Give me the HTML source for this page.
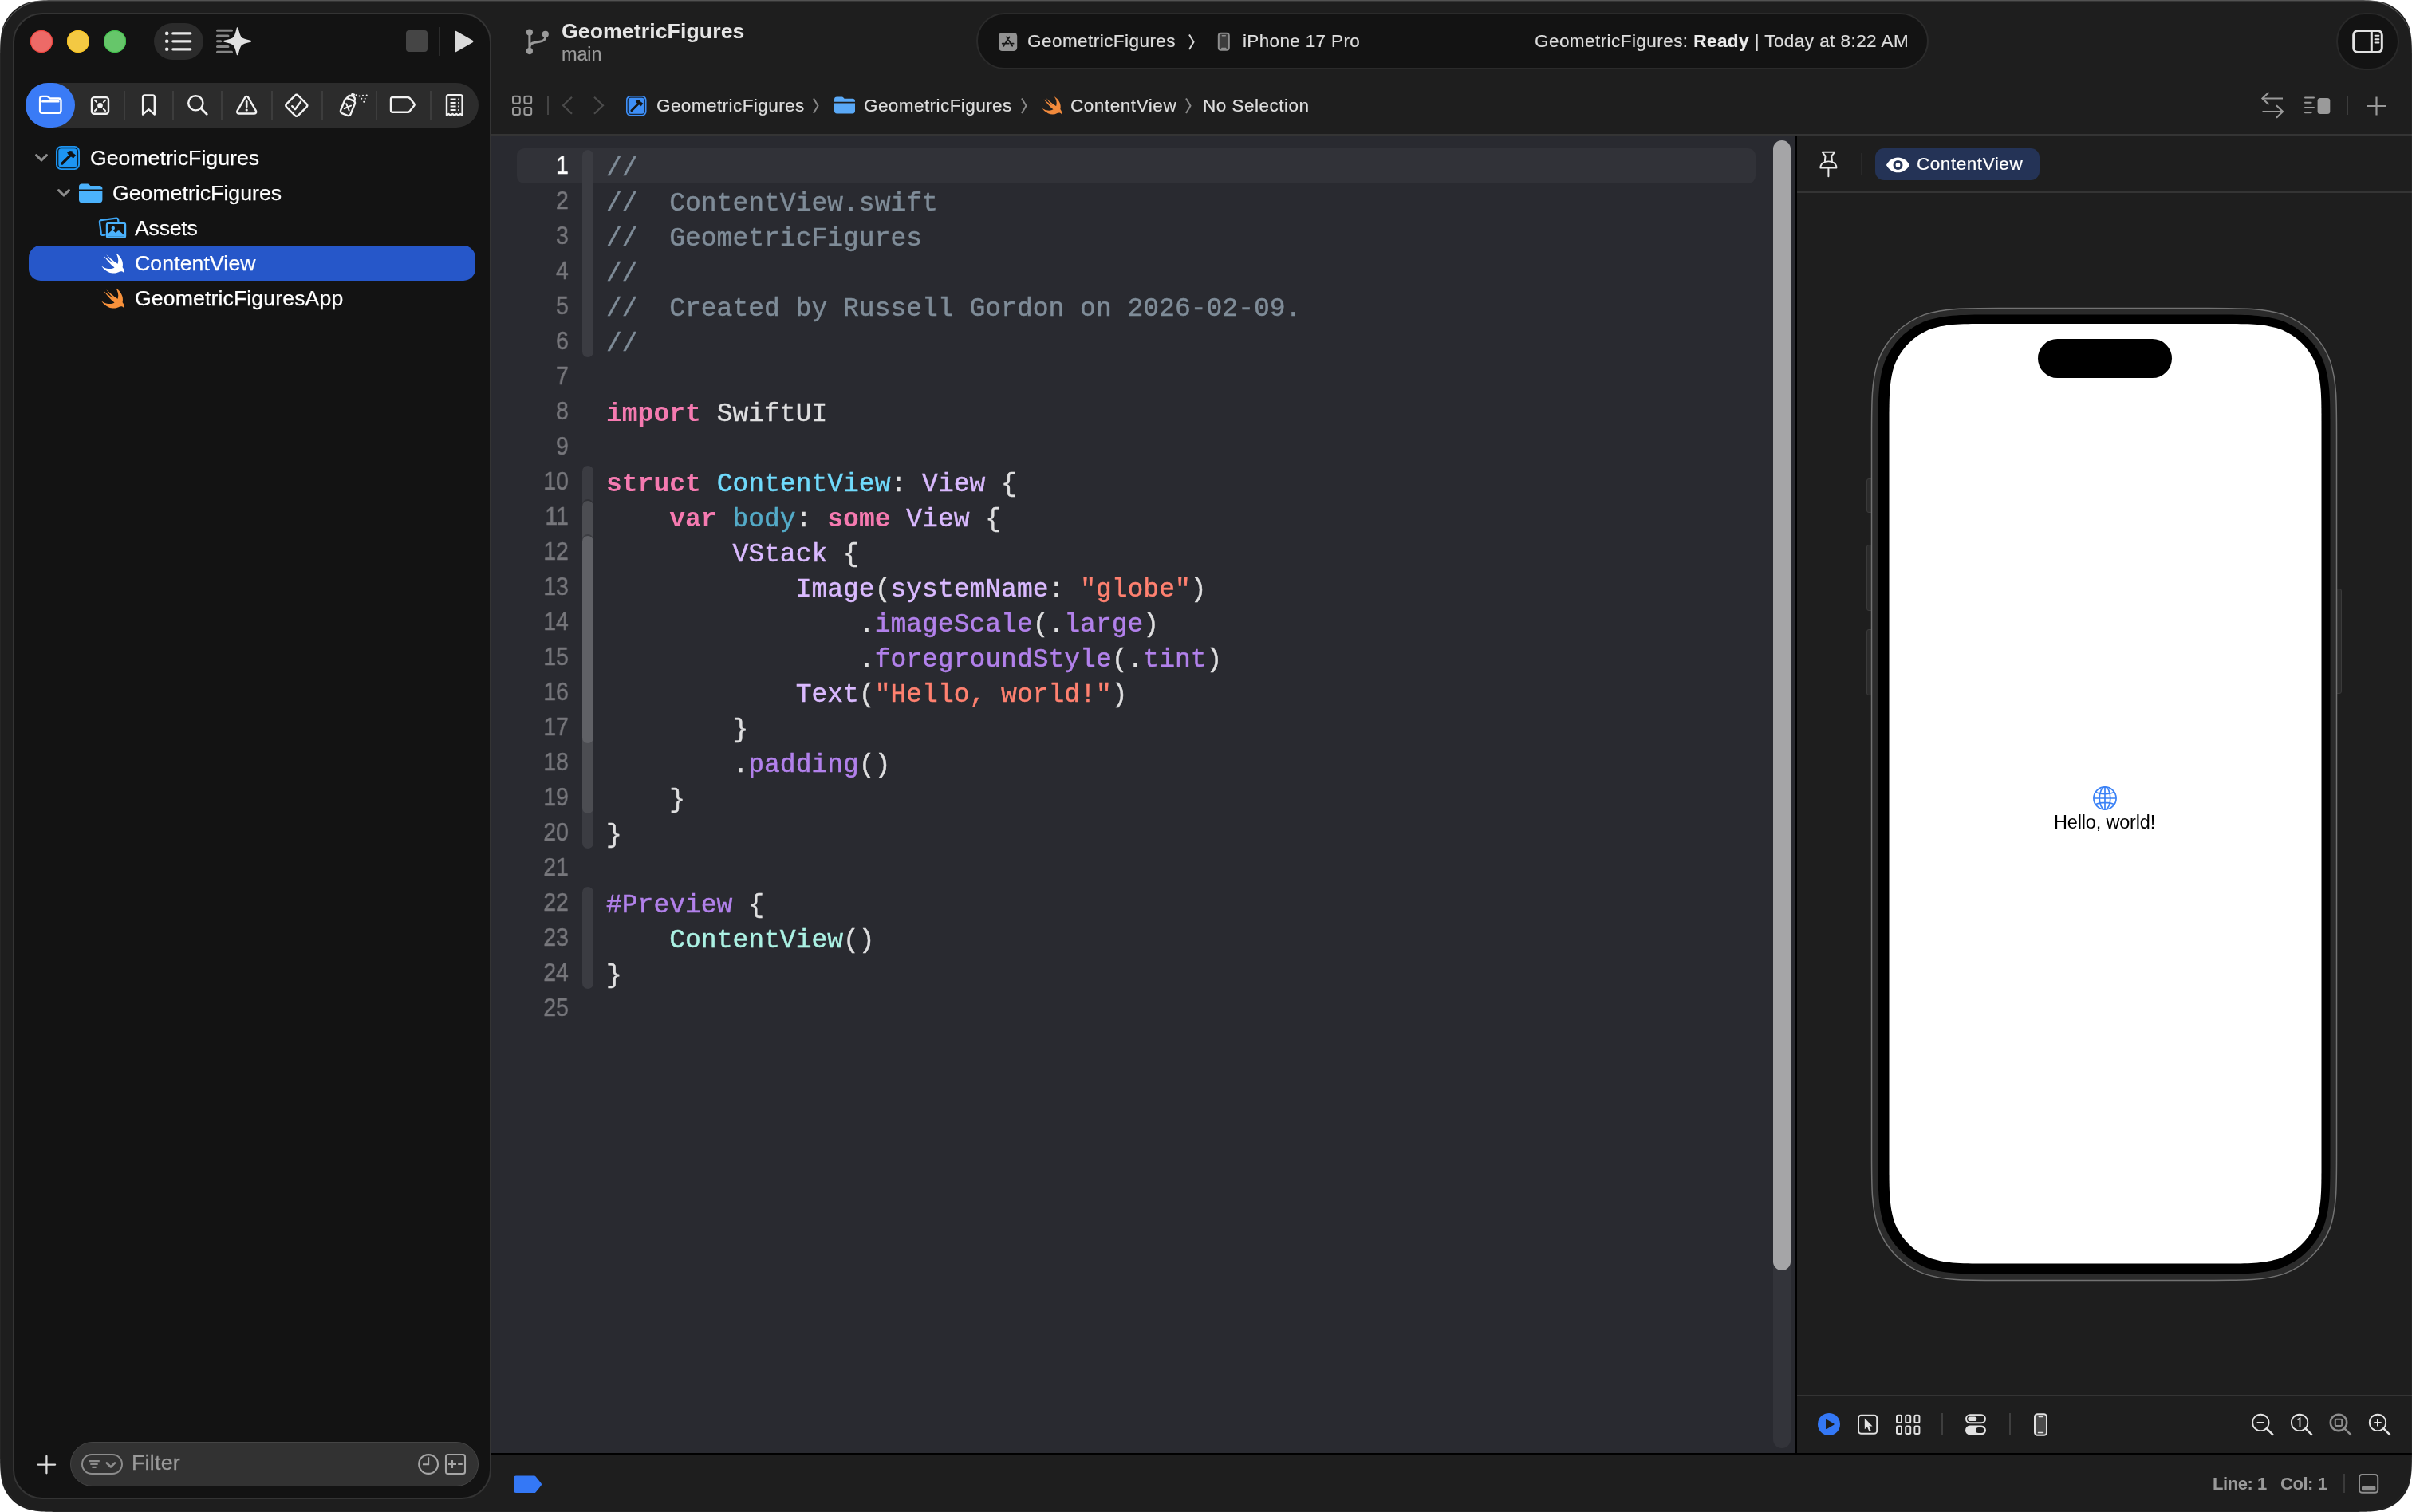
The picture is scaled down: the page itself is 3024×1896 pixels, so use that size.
<!DOCTYPE html>
<html lang="en">
<head>
<meta charset="utf-8">
<title>GeometricFigures — ContentView.swift</title>
<style>
*{box-sizing:border-box;margin:0;padding:0}
html,body{width:3024px;height:1896px;background:#fff;overflow:hidden}
body{font-family:"Liberation Sans",sans-serif;color:#dfdfdf;position:relative}
.abs{position:absolute}
#win{position:absolute;left:0;top:0;width:3024px;height:1896px;background:#1e1e1e;overflow:hidden;clip-path:path('M79.49 0L2944.51 0C2967.4 0 2978.84 0 2991.16 3.9C3004.61 8.79 3015.21 19.39 3020.1 32.84C3024 45.16 3024 56.6 3024 79.49L3024 1816.51C3024 1839.4 3024 1850.84 3020.1 1863.16C3015.21 1876.61 3004.61 1887.21 2991.16 1892.1C2978.84 1896 2967.4 1896 2944.51 1896L79.49 1896C56.6 1896 45.16 1896 32.84 1892.1C19.39 1887.21 8.79 1876.61 3.9 1863.16C0 1850.84 0 1839.4 0 1816.51L0 79.49C0 56.6 0 45.16 3.9 32.84C8.79 19.39 19.39 8.79 32.84 3.9C45.16 0 56.6 0 79.49 0Z')}
#winhl{position:absolute;left:0;top:0;width:3024px;height:1896px;border-radius:56px;box-shadow:inset 0 1.5px 0 rgba(255,255,255,.2), inset 0 0 0 1px rgba(255,255,255,.04);pointer-events:none;z-index:50;clip-path:path('M79.49 0L2944.51 0C2967.4 0 2978.84 0 2991.16 3.9C3004.61 8.79 3015.21 19.39 3020.1 32.84C3024 45.16 3024 56.6 3024 79.49L3024 1816.51C3024 1839.4 3024 1850.84 3020.1 1863.16C3015.21 1876.61 3004.61 1887.21 2991.16 1892.1C2978.84 1896 2967.4 1896 2944.51 1896L79.49 1896C56.6 1896 45.16 1896 32.84 1892.1C19.39 1887.21 8.79 1876.61 3.9 1863.16C0 1850.84 0 1839.4 0 1816.51L0 79.49C0 56.6 0 45.16 3.9 32.84C8.79 19.39 19.39 8.79 32.84 3.9C45.16 0 56.6 0 79.49 0Z')}
#sidebar{position:absolute;left:16px;top:16px;width:600px;height:1864px;border-radius:37px;background:#131313;border:2px solid #343434;z-index:5}
#editor{position:absolute;left:616px;top:170px;width:1635px;height:1652px;background:#292a30;overflow:hidden}
#preview{position:absolute;left:2253px;top:170px;width:771px;height:1652px;background:#1e1e1e}
.hline{position:absolute;height:2px;background:#343434}
.vline{position:absolute;width:2px;background:#3a3a3a}
svg{position:absolute;overflow:visible}
.t{position:absolute;white-space:pre;line-height:1;will-change:transform}
/* text styles */
.s13{font-size:26.600px;letter-spacing:.05px;color:#fff;-webkit-text-stroke:.25px}
.s11{font-size:22.5px;letter-spacing:.38px;color:#dedede;-webkit-text-stroke:.2px}
/* code */
#code{will-change:transform;position:absolute;left:143.8px;top:19.75px;-webkit-text-stroke:.45px;font-family:"Liberation Mono",monospace;font-size:33px;line-height:44px;color:#dfdfe0;white-space:pre}
#code div{height:44px}
.cm{color:#7f8c98}.kw{color:#f57ab0;font-weight:bold;-webkit-text-stroke:0}.st{color:#ff8170}.td{color:#70dbfd}.od{color:#54abc8}
.pt{color:#acf2e4}.ot{color:#dabaff}.of{color:#b281eb}
#lnum{will-change:transform;position:absolute;left:0;top:15px;width:96.8px;-webkit-text-stroke:.55px;text-align:right;font-size:32px;line-height:44px;color:#77777c;transform:scaleX(.885);transform-origin:100% 0}
#lnum div{height:44px}
.rib{position:absolute;left:114px;width:14px;border-radius:7px}
</style>
</head>
<body>
<svg width="0" height="0" style="position:absolute"><defs>
<g id="swift"><path transform="translate(-3.600 -5.400) scale(1.585)" d="M13.543 3.410c4.114 2.470 6.545 7.162 5.549 11.131-.024.093-.050.181-.076.272l.002.001c2.062 2.538 1.500 5.258 1.236 4.745-1.072-2.086-3.066-1.568-4.088-1.043a6.803 6.803 0 0 1-.281.158l-.020.012-.002.002c-2.115 1.123-4.957 1.205-7.812-.022a12.568 12.568 0 0 1-5.640-4.838c.649.480 1.350.902 2.097 1.252 3.019 1.414 6.051 1.311 8.197-.002C9.651 12.730 7.101 9.670 5.146 7.191a10.628 10.628 0 0 1-1.005-1.384c2.340 2.142 6.038 4.830 7.365 5.576C8.690 8.408 6.208 4.743 6.324 4.860c4.436 4.470 8.528 6.996 8.528 6.996.154.085.270.154.360.213.085-.215.160-.437.224-.668.708-2.588-.090-5.548-1.893-7.992z"/></g>
<g id="foldericon"><path d="M0 4.200C0 1.900 1.400.500 3.700.500h6.600c1.400 0 2.200.400 3.100 1.300l1.200 1.200h11.700c2.300 0 3.700 1.400 3.700 3.700v.900H0zM0 9.600h30v11.200c0 2.300-1.400 3.700-3.700 3.700H3.700C1.400 24.500 0 23.100 0 20.800z"/></g>
<g id="projicon"><rect width="30" height="30" rx="6.500" fill="#1d95f3"/><rect x="2.600" y="2.600" width="24.800" height="24.800" rx="4.300" fill="none" stroke="#0b2233" stroke-width="1.500"/><path d="M8 22L18.200 11.800" fill="none" stroke="#111" stroke-width="3.300" stroke-linecap="round"/><path d="M14.600 7.900c2.200-1.500 4.700-1.700 6.300-.800l-1 1.100 4.700 3.300-2.600 3.600-6.300-4.500z" fill="#111" stroke="#111" stroke-width=".8" stroke-linejoin="round"/></g>
<g id="projicon2"><rect width="30" height="30" rx="6.500" fill="#3e8ff7"/><rect x="2.600" y="2.600" width="24.800" height="24.800" rx="4.300" fill="none" stroke="#15263d" stroke-width="1.500"/><path d="M8 22L18.200 11.800" fill="none" stroke="#151515" stroke-width="3.300" stroke-linecap="round"/><path d="M14.600 7.900c2.200-1.500 4.700-1.700 6.300-.800l-1 1.100 4.700 3.300-2.600 3.600-6.300-4.500z" fill="#151515" stroke="#151515" stroke-width=".8" stroke-linejoin="round"/></g>
<g id="chev"><path d="M1.600 1.600L8 8l6.400-6.400" fill="none" stroke="#8c8c8c" stroke-width="3.100" stroke-linecap="round" stroke-linejoin="round"/></g>
</defs></svg>
<div id="win">

<!-- ===== top toolbar (right of sidebar) ===== -->
<!-- title / branch -->
<svg style="left:656px;top:32px" width="36" height="40" viewBox="656 32 36 40"><g fill="#9a9a9a" stroke="none"><circle cx="663.9" cy="40.6" r="4.1"/><circle cx="683.8" cy="42.9" r="4.1"/><circle cx="663.9" cy="64.1" r="4.1"/></g><path d="M663.9 40.6V64.1M683.800 42.900V46.500C683.800 50.500 681 51.600 676.500 52.300L670.500 53.300C666 54.100 663.900 56 663.900 60" fill="none" stroke="#9a9a9a" stroke-width="3"/></svg>
<div class="t" style="left:703.600px;top:25.600px;font-size:26.600px;font-weight:bold;letter-spacing:.12px;color:#e6e6e6">GeometricFigures</div>
<div class="t" style="left:703.600px;top:57px;font-size:23.500px;letter-spacing:-.15px;color:#9b9b9b;-webkit-text-stroke:.2px">main</div>

<!-- activity pill -->
<div class="abs" style="left:1224px;top:16px;width:1194px;height:71px;border-radius:36px;background:#131313;border:2px solid #2b2b2b"></div>
<svg style="left:1251.900px;top:40.600px" width="23.300" height="23.100" viewBox="0 0 24 24"><rect width="24" height="24" rx="4.600" fill="#929292"/><path d="M13.900 5.700L8.400 14.200M10.400 5.600L17.700 17.500M4.800 14.200H13M16.400 14.200H19.200M7.300 15.900L6.500 17.400" fill="none" stroke="#161616" stroke-width="1.900" stroke-linecap="round"/></svg>
<div class="t s11" style="left:1288px;top:41px;letter-spacing:.45px">GeometricFigures</div>
<svg style="left:1489px;top:42px" width="10" height="22" viewBox="0 0 10 22"><path d="M2 1.500L7.500 10.800 2 20.100" fill="none" stroke="#d8d8d8" stroke-width="2"/></svg>
<svg style="left:1526px;top:40px" width="17" height="25" viewBox="0 0 17 25"><rect x="1.800" y="1.800" width="13" height="21" rx="3" fill="#3c3c3c" stroke="#8e8e8e" stroke-width="2"/><path d="M6.300 4.700h4M5.800 20.400h5" stroke="#8e8e8e" stroke-width="1.400" stroke-linecap="round"/></svg>
<div class="t s11" style="left:1558px;top:41px;letter-spacing:.35px">iPhone 17 Pro</div>
<div class="t s11" style="left:1924px;top:41px;letter-spacing:.44px;color:#dcdcdc">GeometricFigures: <b style="color:#ececec">Ready</b> | Today at 8:22 AM</div>

<!-- inspector toggle -->
<div class="abs" style="left:2929px;top:16px;width:79px;height:72px;border-radius:36px;background:#131313;border:2px solid #292929"></div>
<svg style="left:2946px;top:34px" width="46" height="36" viewBox="2946 34 46 36"><rect x="2950.700" y="38.400" width="35.600" height="27.200" rx="5.500" fill="none" stroke="#e2e2e2" stroke-width="3"/><path d="M2973.300 38.400v27.200" stroke="#e2e2e2" stroke-width="3"/><path d="M2977.600 44.800h4.800M2977.600 49.200h4.800M2977.600 53.600h4.800" stroke="#e2e2e2" stroke-width="2" stroke-linecap="round"/></svg>

<!-- jump bar -->
<svg style="left:640px;top:118px" width="30" height="30" viewBox="640 118 30 30"><g fill="none" stroke="#9a9a9a" stroke-width="2"><rect x="643" y="120.700" width="8.800" height="9" rx="2.200"/><rect x="657.400" y="120.700" width="8.800" height="9" rx="2.200"/><rect x="643" y="135" width="8.800" height="9" rx="2.200"/><rect x="657.400" y="135" width="8.800" height="9" rx="2.200"/></g></svg>
<div class="abs" style="left:686px;top:120px;width:2px;height:24px;background:#444"></div>
<svg style="left:700px;top:118px" width="64" height="30" viewBox="700 118 64 30"><path d="M717 121.800L706 132.300 717 142.800M745 121.800L756 132.300 745 142.800" fill="none" stroke="#4b4b4b" stroke-width="2.200"/></svg>
<svg style="left:785px;top:119.500px" width="25.500" height="25.500" viewBox="0 0 30 30"><use href="#projicon2"/></svg>
<div class="t s11" style="left:822.500px;top:121.500px;letter-spacing:.43px">GeometricFigures</div>
<svg style="left:1018px;top:122px" width="10" height="22" viewBox="0 0 10 22"><path d="M2 1.500L7.500 10.800 2 20.100" fill="none" stroke="#8a8a8a" stroke-width="2"/></svg>
<svg style="left:1045.500px;top:120.500px" width="26" height="22" viewBox="0 0 30 25"><use href="#foldericon" fill="#5aa9f7"/></svg>
<div class="t s11" style="left:1082.500px;top:121.500px;letter-spacing:.43px">GeometricFigures</div>
<svg style="left:1278.500px;top:122px" width="10" height="22" viewBox="0 0 10 22"><path d="M2 1.500L7.500 10.800 2 20.100" fill="none" stroke="#8a8a8a" stroke-width="2"/></svg>
<svg style="left:1306px;top:121px" width="25.500" height="22" viewBox="0 0 29 25"><use href="#swift" fill="#f28a3c"/></svg>
<div class="t s11" style="left:1342px;top:121.500px;letter-spacing:.55px">ContentView</div>
<svg style="left:1485px;top:122px" width="10" height="22" viewBox="0 0 10 22"><path d="M2 1.500L7.500 10.800 2 20.100" fill="none" stroke="#8a8a8a" stroke-width="2"/></svg>
<div class="t s11" style="left:1508px;top:121.500px;letter-spacing:.5px">No Selection</div>

<!-- editor options (right) -->
<svg style="left:2832px;top:112px" width="36" height="40" viewBox="2832 112 36 40"><path d="M2862 123.500h-25.500M2844.500 115.800l-8 7.700 8 7.700M2836.500 140h25.500M2854 132.300l8 7.700-8 7.700" fill="none" stroke="#9a9a9a" stroke-width="2.200"/></svg>
<svg style="left:2886px;top:118px" width="40" height="28" viewBox="2886 118 40 28"><path d="M2890 122.400h11M2890 128.700h7.600M2890 134.900h11M2890 141.200h7.600" stroke="#9a9a9a" stroke-width="2" stroke-linecap="round"/><rect x="2905.600" y="123" width="15.700" height="20" rx="3.500" fill="#9a9a9a"/></svg>
<div class="abs" style="left:2942px;top:120px;width:2px;height:24px;background:#3c3c3c"></div>
<svg style="left:2966px;top:120px" width="28" height="26" viewBox="2966 120 28 26"><path d="M2968 133h23M2979.500 121.500v23" stroke="#9a9a9a" stroke-width="2.200"/></svg>

<div class="hline" style="left:616px;top:168px;width:2408px"></div>

<!-- ===== editor ===== -->
<div id="editor">
  <div class="abs" style="left:32px;top:16px;width:1553px;height:44px;border-radius:9px;background:#313238"></div>
  <div class="rib" style="top:18px;height:260px;background:#3b3c42"></div>
  <div class="rib" style="top:414px;height:480px;background:#3b3c42"></div>
  <div class="rib" style="top:458px;height:392px;background:#4c4d52;box-shadow:0 -2px 0 #303136"></div>
  <div class="rib" style="top:502px;height:260px;background:#606166;box-shadow:0 -2px 0 #3c3d42"></div>
  <div class="rib" style="top:942px;height:128px;background:#3b3c42"></div>
  <div id="lnum"><div style="color:#fff">1</div><div>2</div><div>3</div><div>4</div><div>5</div><div>6</div><div>7</div><div>8</div><div>9</div><div>10</div><div>11</div><div>12</div><div>13</div><div>14</div><div>15</div><div>16</div><div>17</div><div>18</div><div>19</div><div>20</div><div>21</div><div>22</div><div>23</div><div>24</div><div>25</div></div>
  <div id="code"><div class="cm">//</div><div class="cm">//  ContentView.swift</div><div class="cm">//  GeometricFigures</div><div class="cm">//</div><div class="cm">//  Created by Russell Gordon on 2026-02-09.</div><div class="cm">//</div><div> </div><div><span class="kw">import</span> SwiftUI</div><div> </div><div><span class="kw">struct</span> <span class="td">ContentView</span>: <span class="ot">View</span> {</div><div>    <span class="kw">var</span> <span class="od">body</span>: <span class="kw">some</span> <span class="ot">View</span> {</div><div>        <span class="ot">VStack</span> {</div><div>            <span class="ot">Image</span>(<span class="ot">systemName</span>: <span class="st">"globe"</span>)</div><div>                .<span class="of">imageScale</span>(.<span class="of">large</span>)</div><div>                .<span class="of">foregroundStyle</span>(.<span class="of">tint</span>)</div><div>            <span class="ot">Text</span>(<span class="st">"Hello, world!"</span>)</div><div>        }</div><div>        .<span class="of">padding</span>()</div><div>    }</div><div>}</div><div> </div><div><span class="of">#Preview</span> {</div><div>    <span class="pt">ContentView</span>()</div><div>}</div><div> </div></div>
  <!-- scrollbar -->
  <div class="abs" style="left:1607px;top:6px;width:22px;height:1640px;border-radius:11px;background:#33343a"></div>
  <div class="abs" style="left:1607px;top:6px;width:22px;height:1417px;border-radius:11px;background:#a5a5a7"></div>
</div>
<div class="abs" style="left:2251px;top:170px;width:2px;height:1652px;background:#000"></div>
<div class="abs" style="left:616px;top:1822px;width:2408px;height:2px;background:#000"></div>

<!-- ===== preview canvas ===== -->
<div id="preview">
  <div class="hline" style="left:0;top:70px;width:771px"></div>
  <div class="hline" style="left:0;top:1579px;width:771px"></div>
</div>


<!-- preview header (window coords) -->
<svg style="left:2278px;top:188px" width="30" height="36" viewBox="2278 188 30 36" fill="none" stroke="#e8e8e8" stroke-width="2" stroke-linejoin="round" stroke-linecap="round"><path d="M2284.800 190.800H2300.200L2296.300 195.600 2297 203.100C2300.500 204.400 2302.400 207.200 2302.400 210.500H2282.400C2282.400 207.200 2284.300 204.400 2287.800 203.100L2288.500 195.600Z"/><path d="M2287.800 203.100Q2292.400 201.600 2297 203.100" stroke-width="1.600"/><path d="M2292.400 211V221.200"/></svg>
<div class="abs" style="left:2333px;top:192px;width:2px;height:27px;background:#292929"></div>
<div class="abs" style="left:2351px;top:186px;width:206px;height:40px;border-radius:11px;background:#243356"></div>
<svg style="left:2364px;top:196px" width="32" height="22" viewBox="2364 196 32 22"><path d="M2364.900 206.900c3.300-5.800 8.300-9.300 14.600-9.300s11.300 3.500 14.600 9.300c-3.300 5.800-8.300 9.300-14.600 9.300s-11.300-3.500-14.600-9.300z" fill="#fff"/><circle cx="2379.500" cy="206.900" r="6" fill="#243356"/><circle cx="2379.500" cy="206.900" r="2.900" fill="#fff"/></svg>
<div class="t s11" style="left:2403px;top:195px;letter-spacing:.55px;color:#fff">ContentView</div>

<!-- device -->
<div class="abs" style="left:2340px;top:600px;width:8px;height:43px;border-radius:3px 0 0 3px;background:#2b2b2b;border:1px solid #3a3a3a"></div>
<div class="abs" style="left:2340px;top:683px;width:8px;height:83px;border-radius:3px 0 0 3px;background:#2b2b2b;border:1px solid #3a3a3a"></div>
<div class="abs" style="left:2340px;top:789px;width:8px;height:83px;border-radius:3px 0 0 3px;background:#2b2b2b;border:1px solid #3a3a3a"></div>
<div class="abs" style="left:2928px;top:738px;width:8px;height:132px;border-radius:0 3px 3px 0;background:#2b2b2b;border:1px solid #3a3a3a"></div>
<svg style="left:2346px;top:386px" width="584" height="1220" viewBox="0 0 584 1220"><path d="M161.77 0.5L422.23 0.5C468.66 0.5 491.88 0.5 516.88 8.4C544.17 18.34 565.66 39.83 575.6 67.12C583.5 92.12 583.5 115.34 583.5 161.77L583.5 1058.23C583.5 1104.66 583.5 1127.88 575.6 1152.88C565.66 1180.17 544.17 1201.66 516.88 1211.6C491.88 1219.5 468.66 1219.5 422.23 1219.5L161.77 1219.5C115.34 1219.5 92.12 1219.5 67.12 1211.6C39.83 1201.66 18.34 1180.17 8.4 1152.88C0.5 1127.88 0.5 1104.66 0.5 1058.23L0.5 161.77C0.5 115.34 0.5 92.12 8.4 67.12C18.34 39.83 39.83 18.34 67.12 8.4C92.12 0.5 115.34 0.5 161.77 0.5Z" fill="#2b2b2b" stroke="#727272" stroke-width="1.5"/><path d="M158.31 8.5L425.69 8.5C468.83 8.5 490.4 8.5 513.61 15.84C538.96 25.07 558.93 45.04 568.16 70.39C575.5 93.6 575.5 115.17 575.5 158.31L575.5 1061.69C575.5 1104.83 575.5 1126.4 568.16 1149.61C558.93 1174.96 538.96 1194.93 513.61 1204.16C490.4 1211.5 468.83 1211.5 425.69 1211.5L158.31 1211.5C115.17 1211.5 93.6 1211.5 70.39 1204.16C45.04 1194.93 25.07 1174.96 15.84 1149.61C8.5 1126.4 8.5 1104.83 8.5 1061.69L8.5 158.31C8.5 115.17 8.5 93.6 15.84 70.39C25.07 45.04 45.04 25.07 70.39 15.84C93.6 8.5 115.17 8.5 158.31 8.5Z" fill="#000"/><path d="M150.91 20L436.09 20C473.07 20 491.55 20 511.45 26.29C533.18 34.2 550.3 51.32 558.21 73.05C564.5 92.95 564.5 111.43 564.5 148.41L564.5 1070.09C564.5 1107.07 564.5 1125.55 558.21 1145.45C550.3 1167.18 533.18 1184.3 511.45 1192.21C491.55 1198.5 473.07 1198.5 436.09 1198.5L150.91 1198.5C113.93 1198.5 95.45 1198.5 75.55 1192.21C53.82 1184.3 36.7 1167.18 28.79 1145.45C22.5 1125.55 22.5 1107.07 22.5 1070.09L22.5 148.41C22.5 111.43 22.5 92.95 28.79 73.05C36.7 51.32 53.82 34.2 75.55 26.29C95.45 20 113.93 20 150.91 20Z" fill="#fff"/></svg>
<div class="abs" style="left:2554.500px;top:424.500px;width:168.500px;height:49.500px;border-radius:25px;background:#000"></div>
<svg style="left:2622px;top:984px" width="34" height="34" viewBox="-17 -17 34 34" fill="none" stroke="#3b82f6" stroke-width="1.700"><circle r="14.100"/><ellipse rx="6.800" ry="14"/><path d="M0-14v28M-14 0h28M-11.600-7.600c3.200 1.500 7.200 2.300 11.600 2.300s8.400-.800 11.600-2.300M-11.600 7.600c3.200-1.500 7.200-2.300 11.600-2.300s8.400.800 11.600 2.300"/></svg>
<div class="t" style="left:2574.800px;top:1019.800px;font-size:23.500px;letter-spacing:-.17px;color:#000">Hello, world!</div>

<!-- preview bottom toolbar -->
<div class="abs" style="left:2279px;top:1772px;width:28px;height:28px;border-radius:50%;background:#3478f6"></div>
<svg style="left:2286px;top:1778px" width="16" height="16" viewBox="2286 1778 16 16"><path d="M2289 1780.800v10.400a.8.800 0 0 0 1.200.7l9-5.200a.8.800 0 0 0 0-1.400l-9-5.200a.8.800 0 0 0-1.200.7z" fill="#1e1e1e"/></svg>
<svg style="left:2326px;top:1770px" width="250" height="34" viewBox="2326 1770 250 34" fill="none" stroke="#e2e2e2" stroke-width="2">
<rect x="2330" y="1774.700" width="23.200" height="23" rx="3.500"/><path d="M2337.800 1778.500v13.800l3.200-3 2.600 6 2.200-1-2.600-5.800h4.400z" fill="#e2e2e2" stroke="none"/>
<rect x="2378" y="1774.700" width="6" height="9.400" rx="1.500"/><rect x="2389.200" y="1774.700" width="6" height="9.400" rx="1.500"/><rect x="2400.400" y="1774.700" width="6" height="9.400" rx="1.500"/><rect x="2378" y="1788.500" width="6" height="9.400" rx="1.500"/><rect x="2389.200" y="1788.500" width="6" height="9.400" rx="1.500"/><rect x="2400.400" y="1788.500" width="6" height="9.400" rx="1.500"/>
<rect x="2465" y="1774.200" width="24" height="10" rx="5"/><rect x="2467.300" y="1776.400" width="11" height="5.600" rx="2.800" fill="#e2e2e2" stroke="none"/>
<rect x="2464" y="1787.500" width="26" height="12" rx="6" fill="#e2e2e2" stroke="none"/><rect x="2477" y="1790" width="10.500" height="7" rx="3.500" fill="#1e1e1e" stroke="none"/>
<rect x="2551" y="1773.200" width="15" height="26.600" rx="3.500" fill="#4a4a4a"/><path d="M2556.300 1776.600h4.400M2555.500 1796.600h6" stroke-width="1.500" stroke-linecap="round"/>
</svg>
<div class="abs" style="left:2434px;top:1772px;width:2px;height:28px;background:#3e3e3e"></div>
<div class="abs" style="left:2519px;top:1772px;width:2px;height:28px;background:#3e3e3e"></div>
<svg style="left:2818px;top:1768px" width="184" height="36" viewBox="2818 1768 184 36" fill="none" stroke="#e4e4e4" stroke-width="1.900">
<circle cx="2834.300" cy="1783.900" r="10.200"/><path d="M2841.700 1791.300l7.600 7.600" stroke-width="2.600" stroke-linecap="round"/><path d="M2829.600 1783.900h9.400" stroke-width="2"/>
<circle cx="2883.100" cy="1783.900" r="10.200"/><path d="M2890.500 1791.300l7.600 7.600" stroke-width="2.600" stroke-linecap="round"/><path d="M2880.500 1780.500l3-2v11" stroke-width="1.800"/>
<g stroke="#8e8e8e"><circle cx="2932" cy="1783.900" r="10.200" stroke-width="2.600"/><path d="M2939.400 1791.300l7.600 7.600" stroke-width="2.600" stroke-linecap="round"/><rect x="2927.800" y="1779.700" width="8.400" height="8.400" rx="1.500" stroke-width="2"/></g>
<circle cx="2981" cy="1783.900" r="10.200"/><path d="M2988.400 1791.300l7.600 7.600" stroke-width="2.600" stroke-linecap="round"/><path d="M2976.300 1783.900h9.400M2981 1779.200v9.400" stroke-width="2"/>
</svg>

<!-- status bar -->
<svg style="left:642px;top:1848.800px" width="40" height="26" viewBox="642 1848 40 26"><path d="M644 1852.600c0-1.900 1.100-3 3-3h22.500c1 0 1.800.400 2.400 1.200l6.600 8.200c.700.900.700 1.800 0 2.700l-6.600 8.200c-.6.800-1.400 1.200-2.400 1.200H647c-1.900 0-3-1.100-3-3z" fill="#3478f6"/></svg>
<div class="t" style="left:2774.300px;top:1850px;font-size:22px;font-weight:bold;letter-spacing:-.45px;color:#9a9a9a">Line: 1</div><div class="t" style="left:2858.500px;top:1850px;font-size:22px;font-weight:bold;letter-spacing:-.45px;color:#9a9a9a">Col: 1</div>
<div class="abs" style="left:2938px;top:1848px;width:2px;height:24px;background:#3a3a3a"></div>
<svg style="left:2954px;top:1846px" width="32" height="30" viewBox="2954 1846 32 30"><rect x="2958" y="1849" width="23.200" height="22.700" rx="3.500" fill="none" stroke="#8e8e8e" stroke-width="2"/><rect x="2961" y="1863.900" width="17.400" height="5.400" rx="1" fill="#8e8e8e"/></svg>

<!-- ===== sidebar ===== -->
<div id="sbc" style="position:absolute;left:0;top:0;width:620px;height:1896px;z-index:6">
<!-- traffic lights -->
<div class="abs" style="left:38px;top:38px;width:28px;height:28px;border-radius:50%;background:#ed6a67;box-shadow:inset 0 0 0 1px rgba(246,62,54,.85)"></div>
<div class="abs" style="left:84px;top:38px;width:28px;height:28px;border-radius:50%;background:#f3c943;box-shadow:inset 0 0 0 1px rgba(250,194,24,.85)"></div>
<div class="abs" style="left:130px;top:38px;width:28px;height:28px;border-radius:50%;background:#66c66a;box-shadow:inset 0 0 0 1px rgba(58,194,70,.85)"></div>
<!-- sidebar toggle -->
<div class="abs" style="left:193px;top:29px;width:62px;height:46px;border-radius:23px;background:#2b2b2b"></div>
<svg style="left:200px;top:34px" width="50" height="36" viewBox="200 34 50 36"><g fill="#e6e6e6"><circle cx="209.200" cy="41.900" r="2.300"/><circle cx="209.200" cy="51.800" r="2.300"/><circle cx="209.200" cy="61.800" r="2.300"/></g><path d="M216.800 41.900h22M216.800 51.800h22M216.800 61.800h22" stroke="#e6e6e6" stroke-width="3.300" stroke-linecap="round"/></svg>
<!-- assistant sparkle -->
<svg style="left:266px;top:30px" width="54" height="44" viewBox="266 30 54 44"><path d="M272.500 38.200h18M272.500 45.100h13.400M272.500 51.800h4.200M272.500 58.500h13.400M272.500 65.400h18" stroke="#868686" stroke-width="3.100" stroke-linecap="round"/><path transform="translate(297.700 51.800)" d="M0-16.500C3-3.200 3.200-3 16.500 0 3.200 3 3 3.200 0 16.500-3 3.200-3.200 3-16.500 0-3.200-3-3-3.200 0-16.500Z" fill="#e0e0e0" stroke="#e0e0e0" stroke-width="2" stroke-linejoin="round"/></svg>
<!-- stop / run -->
<div class="abs" style="left:509px;top:38px;width:27px;height:27px;border-radius:4px;background:#454545"></div>
<div class="abs" style="left:550px;top:34px;width:2px;height:36px;background:#2c2c2c"></div>
<svg style="left:566px;top:36px" width="32" height="32" viewBox="566 36 32 32"><path d="M570 40.200v23.600a1.400 1.400 0 0 0 2.100 1.200l20.600-11.800a1.400 1.400 0 0 0 0-2.400L572.100 39a1.400 1.400 0 0 0-2.100 1.200z" fill="#dadada"/></svg>

<!-- navigator tab bar -->
<div class="abs" style="left:32px;top:104px;width:568px;height:56px;border-radius:28px;background:#2c2c2c"></div>
<div class="abs" style="left:32px;top:104px;width:62px;height:56px;border-radius:28px;background:#3a7bf6"></div>
<div class="abs" style="left:155px;top:114px;width:2px;height:36px;background:#3d3d3d"></div>
<div class="abs" style="left:216px;top:114px;width:2px;height:36px;background:#3d3d3d"></div>
<div class="abs" style="left:277px;top:114px;width:2px;height:36px;background:#3d3d3d"></div>
<div class="abs" style="left:340px;top:114px;width:2px;height:36px;background:#3d3d3d"></div>
<div class="abs" style="left:403px;top:114px;width:2px;height:36px;background:#3d3d3d"></div>
<div class="abs" style="left:471px;top:114px;width:2px;height:36px;background:#3d3d3d"></div>
<div class="abs" style="left:539px;top:114px;width:2px;height:36px;background:#3d3d3d"></div>
<svg style="left:40px;top:110px" width="560" height="44" viewBox="40 110 560 44" fill="none" stroke="#f2f2f2" stroke-width="2.400" stroke-linejoin="round" stroke-linecap="round">
<!-- folder -->
<path d="M50.100 124.300v-.400c0-1.900 1.100-3 3-3h5.500c1 0 1.700.300 2.400 1l1.600 1.600h10.900c1.900 0 3 1.100 3 3v12.200c0 1.900-1.100 3-3 3H53.100c-1.900 0-3-1.100-3-3zM53.200 127.200h20.200" stroke="#fff"/>
<!-- source control -->
<rect x="115" y="122.100" width="21" height="20.600" rx="3"/><circle cx="125.500" cy="132.400" r="3.300" fill="#f2f2f2" stroke="none"/><path d="M118.900 125.800l2.300 2.300M132.100 125.800l-2.300 2.300M118.900 139l2.300-2.300M132.100 139l-2.300-2.300" stroke-width="2"/>
<!-- bookmark -->
<path d="M179.100 121.800c0-1.500.900-2.400 2.400-2.400h9.900c1.500 0 2.400.900 2.400 2.400v21.800l-7.350-6.400-7.350 6.400z"/>
<!-- search -->
<circle cx="245.300" cy="129.300" r="9.100"/><path d="M252 136l7.200 7.200" stroke-width="2.800"/>
<!-- warning -->
<path d="M307.300 122.100c.900-1.600 2.900-1.600 3.800 0l9.800 17.100c.900 1.600 0 3.300-1.900 3.300h-19.600c-1.900 0-2.800-1.700-1.900-3.300z"/><path d="M309.200 127.200v6.800" stroke-width="2.600"/><circle cx="309.200" cy="138" r="1.600" fill="#f2f2f2" stroke="none"/>
<!-- tests diamond -->
<path d="M369.800 119.800c1.100-1.100 2.900-1.100 4 0l10.500 10.500c1.100 1.100 1.100 2.900 0 4l-10.500 10.500c-1.100 1.100-2.900 1.100-4 0l-10.500-10.500c-1.100-1.100-1.100-2.900 0-4z"/><path d="M366.200 133.200l3.800 4 7-9.600"/>
<!-- debug spray -->
<g transform="rotate(22 437 133)"><rect x="429.800" y="124.500" width="13.400" height="20" rx="3"/><path d="M431.500 124.300c0-3 2-4.600 5-4.600s5 1.600 5 4.600" /><rect x="434.500" y="116" width="4.500" height="3.500" fill="#f2f2f2" stroke="none"/><path d="M433.300 131.500l6.400 6.400M439.700 131.500l-6.400 6.400" stroke-width="2"/></g>
<g fill="#f2f2f2" stroke="none"><circle cx="446.500" cy="119.200" r="1"/><circle cx="450.500" cy="120.600" r="1"/><circle cx="455" cy="119.800" r="1"/><circle cx="459.700" cy="119.600" r="1"/><circle cx="453.300" cy="123.800" r="1"/><circle cx="457.700" cy="123.800" r="1"/><circle cx="456.200" cy="127.800" r="1"/></g>
<!-- breakpoints tag -->
<path d="M490 124.400c0-1.500.900-2.400 2.400-2.400h18.900c1 0 1.700.400 2.300 1.100l5.600 7c.600.800.600 1.700 0 2.500l-5.600 7c-.600.700-1.300 1.100-2.300 1.100h-18.900c-1.500 0-2.400-.900-2.400-2.400z"/>
<!-- reports -->
<path d="M560 144.500v-23c0-1.500.900-2.400 2.400-2.400h14.800c1.500 0 2.400.900 2.400 2.400v23l-2.450-1.500-2.450 1.500-2.450-1.500-2.450 1.500-2.450-1.500-2.450 1.500-2.450-1.500z"/><path d="M564.600 124.500h7M564.600 129h7M564.600 133.500h7M564.600 138h7M574.200 124.500h1.400M574.200 129h1.400M574.200 133.500h1.400M574.200 138h1.400" stroke-width="1.900" stroke-linecap="butt"/>
</svg>

<!-- file tree -->
<div class="abs" style="left:36px;top:308px;width:560px;height:44px;border-radius:15px;background:#2657c9"></div>
<svg style="left:44px;top:193px" width="16" height="10" viewBox="0 0 16 10"><use href="#chev"/></svg>
<svg style="left:70px;top:183px" width="30" height="30" viewBox="0 0 30 30"><use href="#projicon"/></svg>
<div class="t s13" style="left:112.500px;top:185.000px">GeometricFigures</div>
<svg style="left:72px;top:237px" width="16" height="10" viewBox="0 0 16 10"><use href="#chev"/></svg>
<svg style="left:98.800px;top:229.800px" width="29.400" height="24.500" viewBox="0 0 30 25"><use href="#foldericon" fill="#4bb2fc"/></svg>
<div class="t s13" style="left:140.500px;top:229.000px">GeometricFigures</div>
<svg style="left:124px;top:270px" width="36" height="30" viewBox="124 270 36 30"><path d="M131.500 294.500l-2.300.300c-1.300.200-2.200-.500-2.400-1.800l-1.900-14.500c-.200-1.300.500-2.200 1.800-2.400l19-2.500c1.300-.200 2.200.500 2.400 1.800l.300 2" fill="none" stroke="#3ea6f5" stroke-width="2.300" stroke-linecap="round"/><rect x="132.800" y="278.800" width="25.400" height="20.200" rx="3.200" fill="#4bb2fc"/><rect x="135" y="281" width="21" height="15.800" rx="1.200" fill="#131313"/><circle cx="141.800" cy="286" r="2.200" fill="#4bb2fc"/><path d="M135 296.800v-3.300l4.800-4.300c.7-.6 1.500-.6 2.200 0l3 2.800 2.600-2.400c.7-.6 1.500-.6 2.200 0l6.200 5.600v1.600z" fill="#4bb2fc"/></svg>
<div class="t s13" style="left:168.800px;top:273.000px;letter-spacing:-.2px">Assets</div>
<svg style="left:127px;top:317px" width="29" height="25" viewBox="0 0 29 25"><use href="#swift" fill="#fff"/></svg>
<div class="t s13" style="left:168.800px;top:317.000px;letter-spacing:.12px">ContentView</div>
<svg style="left:127px;top:361px" width="29" height="25" viewBox="0 0 29 25"><use href="#swift" fill="#f7913b"/></svg>
<div class="t s13" style="left:168.800px;top:361.000px;letter-spacing:.14px">GeometricFiguresApp</div>

<!-- filter bar -->
<svg style="left:46px;top:1824px" width="26" height="26" viewBox="46 1824 26 26"><path d="M47.700 1836.600h21.400M58.400 1825.900v21.400" stroke="#dedede" stroke-width="2.300" stroke-linecap="round"/></svg>
<div class="abs" style="left:88px;top:1808px;width:512px;height:56px;border-radius:28px;background:#323232;border:1.5px solid #454545"></div>
<div class="abs" style="left:102px;top:1823px;width:52px;height:26px;border-radius:13px;border:2px solid #8c8c8c"></div>
<svg style="left:108px;top:1827px" width="42" height="18" viewBox="108 1827 42 18"><path d="M111.200 1832.100h13.600M113.300 1836h9.400M115.400 1839.900h5.200" stroke="#8c8c8c" stroke-width="2.200"/><path d="M133.800 1834.500l5.100 5 5.100-5" fill="none" stroke="#8c8c8c" stroke-width="2.600" stroke-linecap="round" stroke-linejoin="round"/></svg>
<div class="t" style="left:165px;top:1821px;font-size:26.600px;letter-spacing:.3px;color:#9a9a9a;-webkit-text-stroke:.3px">Filter</div>
<svg style="left:522px;top:1822px" width="66" height="30" viewBox="522 1822 66 30" fill="none" stroke="#a6a6a6" stroke-width="2.100"><circle cx="537.100" cy="1836" r="11.900"/><path d="M537.100 1827.200V1836.200H530"/><rect x="559" y="1824" width="24" height="24" rx="2.800"/><path d="M562 1836h10M567 1831v10M574.200 1836h5.600"/></svg>
</div>

<div id="sidebar">
</div>

</div>
<div id="winhl"></div>
</body>
</html>
